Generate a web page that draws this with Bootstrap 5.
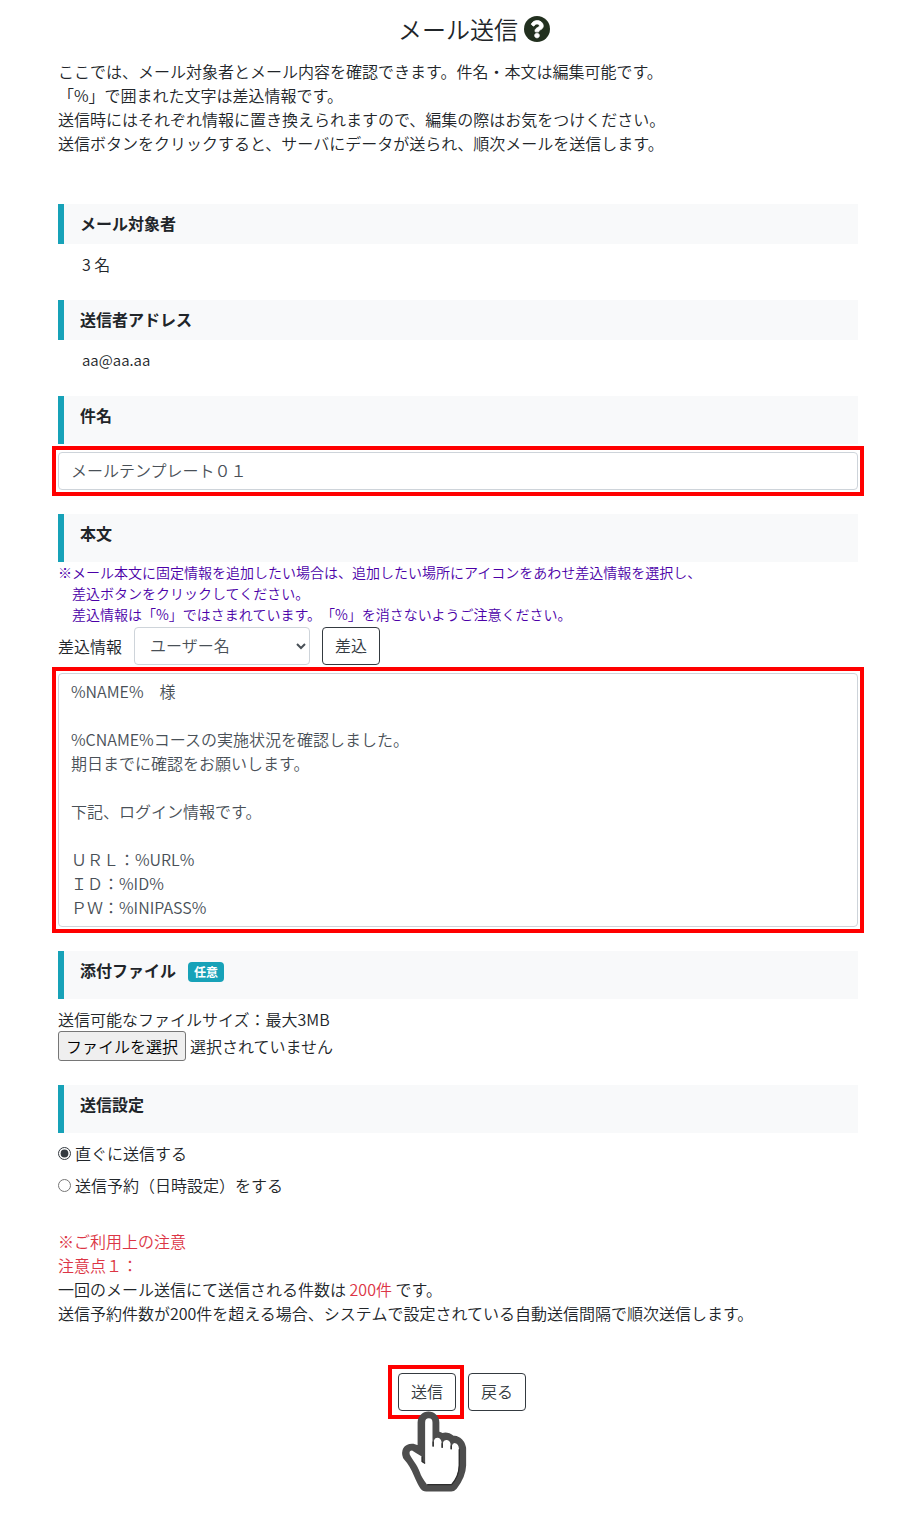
<!DOCTYPE html>
<html lang="ja">
<head>
<meta charset="utf-8">
<meta name="viewport" content="width=device-width, initial-scale=1">
<title>メール送信</title>
<link rel="stylesheet" href="https://cdn.jsdelivr.net/npm/bootstrap@5.3.0/dist/css/bootstrap.min.css">
<style>
body{font-family:"Noto Sans CJK JP",sans-serif;font-size:16px;font-weight:350;line-height:24px;color:#212529;background:#fff;text-spacing-trim:space-all}
.page{padding:12px 42px 102px 58px}
.page-title{font-size:24px;line-height:34px;font-weight:350;padding-left:32px;gap:6px;margin-bottom:13px}
.intro{margin-bottom:49px}
.bar{font-size:16px;line-height:24px;font-weight:700;background:#f8f9fa;border-left:6px solid #17a2b8;padding:7px 16px 9px;margin:0}
.bar-tall{padding-bottom:17px}
.tag{background:#17a2b8;color:#fff;font-size:12px;line-height:20px;border-radius:4px;padding:0 6px;margin-left:12px}
.form-control,.picker{color:#495057;border:1px solid #ced4da;border-radius:4px;font-size:16px;font-weight:350;line-height:24px;padding:5px 12px 7px}
textarea.form-control{resize:none;display:block;overflow:hidden;text-spacing-trim:space-all}
.picker{appearance:auto;background:#fff;width:176px;height:38px;padding:4px 2px 6px 11px}
.marked{outline:4px solid #f00;outline-offset:2px}
.marked-send{outline:4px solid #f00;outline-offset:4px;padding-left:2px}
.hint{font-size:14px;line-height:21px;color:#4b00a8;padding:0 0 2px}
.hint span{padding-left:14px}
.merge-row,.send-row{gap:12px}
.send-row{padding-left:6px}
.btn-line{border:1px solid #343a40;color:#343a40;background:#fff;border-radius:4px;font-size:16px;font-weight:350;line-height:24px;padding:5px 12px 7px}
.file-btn{border:1px solid #767676;border-radius:3px;background:#efefef;color:#000;padding:2px 7px}
input[type=radio]{accent-color:#343a40;width:13px;height:13px;margin:0}
.address{font-size:15px}
.warn{color:#dc3545}
.hand{left:6px;top:38px;width:65px;height:81px;pointer-events:none}
</style>
</head>
<body>
<main class="page">
  <h1 class="page-title d-flex justify-content-center align-items-center">メール送信
    <svg width="26" height="26" viewBox="0 0 512 512" role="img" aria-label="ヘルプ"><circle cx="256" cy="256" r="256" fill="#22301f"/><path fill="#fff" stroke="#fff" stroke-width="16" d="M262.700 90c-54.500 0-89.300 23-116.500 63.800-3.500 5.300-2.400 12.400 2.700 16.300l34.700 26.300c5.200 3.900 12.600 3 16.700-2.100 17.900-22.700 30.100-35.800 57.300-35.800 20.400 0 45.700 13.100 45.700 33 0 15-12.400 22.700-32.500 34C247.100 238.500 216 254.900 216 296v4c0 6.600 5.400 12 12 12h56c6.600 0 12-5.400 12-12v-1.300c0-28.500 83.200-29.600 83.200-106.700 0-58-60.200-102-116.500-102zM256 338c-25.400 0-46 20.600-46 46s20.600 46 46 46 46-20.600 46-46-20.600-46-46-46z"/></svg>
  </h1>
  <p class="intro">ここでは、メール対象者とメール内容を確認できます。件名・本文は編集可能です。<br>「%」で囲まれた文字は差込情報です。<br>送信時にはそれぞれ情報に置き換えられますので、編集の際はお気をつけください。<br>送信ボタンをクリックすると、サーバにデータが送られ、順次メールを送信します。</p>

  <form onsubmit="return false">
    <section class="mb-4">
      <h2 class="bar">メール対象者</h2>
      <div class="pt-2 ps-4">3 名</div>
    </section>
    <section class="mb-4">
      <h2 class="bar">送信者アドレス</h2>
      <div class="pt-2 ps-4 address">aa@aa.aa</div>
    </section>
    <section class="mb-4">
      <h2 class="bar bar-tall mb-2"><label for="subject">件名</label></h2>
      <div class="marked"><input class="form-control" id="subject" type="text" value="メールテンプレート０１"></div>
    </section>
    <section class="mb-4">
      <h2 class="bar bar-tall"><label for="body">本文</label></h2>
      <p class="hint mb-0">※メール本文に固定情報を追加したい場合は、追加したい場所にアイコンをあわせ差込情報を選択し、<br><span>差込ボタンをクリックしてください。</span><br><span>差込情報は「%」ではさまれています。「%」を消さないようご注意ください。</span></p>
      <div class="merge-row d-flex align-items-center mb-2">
        <label for="merge">差込情報</label>
        <select class="picker" id="merge"><option>ユーザー名</option></select>
        <button class="btn btn-line" type="button">差込</button>
      </div>
      <div class="marked"><textarea class="form-control" id="body" rows="10">%NAME%　様

%CNAME%コースの実施状況を確認しました。
期日までに確認をお願いします。

下記、ログイン情報です。

ＵＲＬ：%URL%
ＩＤ：%ID%
ＰＷ：%INIPASS%</textarea></div>
    </section>
    <section class="mb-4">
      <h2 class="bar bar-tall mb-2 d-flex">添付ファイル<span class="tag align-self-end">任意</span></h2>
      <div>送信可能なファイルサイズ：最大3MB</div>
      <div class="d-flex align-items-center gap-1 position-relative">
        <input class="visually-hidden" type="file" id="attach">
        <label class="file-btn" for="attach">ファイルを選択</label><span>選択されていません</span>
      </div>
    </section>
    <section>
      <h2 class="bar bar-tall mb-2">送信設定</h2>
      <div class="d-flex align-items-center gap-1 mb-2"><input type="radio" name="when" id="now" checked><label for="now">直ぐに送信する</label></div>
      <div class="d-flex align-items-center gap-1"><input type="radio" name="when" id="later"><label for="later">送信予約（日時設定）をする</label></div>
    </section>
    <p class="mb-5 mt-4 pt-2"><span class="warn">※ご利用上の注意<br>注意点１：</span><br>一回のメール送信にて送信される件数は <span class="warn">200件</span> です。<br>送信予約件数が200件を超える場合、システムで設定されている自動送信間隔で順次送信します。</p>
    <div class="send-row d-flex justify-content-center">
      <div class="position-relative marked-send">
        <button class="btn btn-line" type="submit">送信</button>
        <svg class="hand position-absolute" viewBox="96 182 194 242" aria-hidden="true">
          <g stroke-linejoin="round">
            <path d="M163 330V216a12 12 0 0 1 24 0V272Q200 256 214 272Q228 260 241 276Q262 272 267 294V345Q266 372 243 402H168C150 375 147 345 118 314Q113 300 126 300Q145 304 163 330Z" fill="#4d4d4d" stroke="#4d4d4d" stroke-width="41"/>
            <path d="M165 338V216a11 12 0 0 1 22 0V288H191V272q2-10 11-10t12 12V292H218V278q2-9 11-9t12 11V296H245V286q2-9 10-8 10 2 11 16V345Q265 378 244 402H171Q153 378 149 364C141 342 127 328 119 312Q116 300 126 300Q138 308 155 318V334Z" fill="#fff"/>
            <path d="M165 339L156 333V318M189 288V273M216 292V278M243 296V285M267 296V345Q266 378 244 402H171" fill="none" stroke="#2d2d2d" stroke-width="4"/>
          </g>
        </svg>
      </div>
      <button class="btn btn-line" type="button">戻る</button>
    </div>
  </form>
</main>
<script src="https://cdn.jsdelivr.net/npm/bootstrap@5.3.0/dist/js/bootstrap.bundle.min.js"></script>
</body>
</html>
